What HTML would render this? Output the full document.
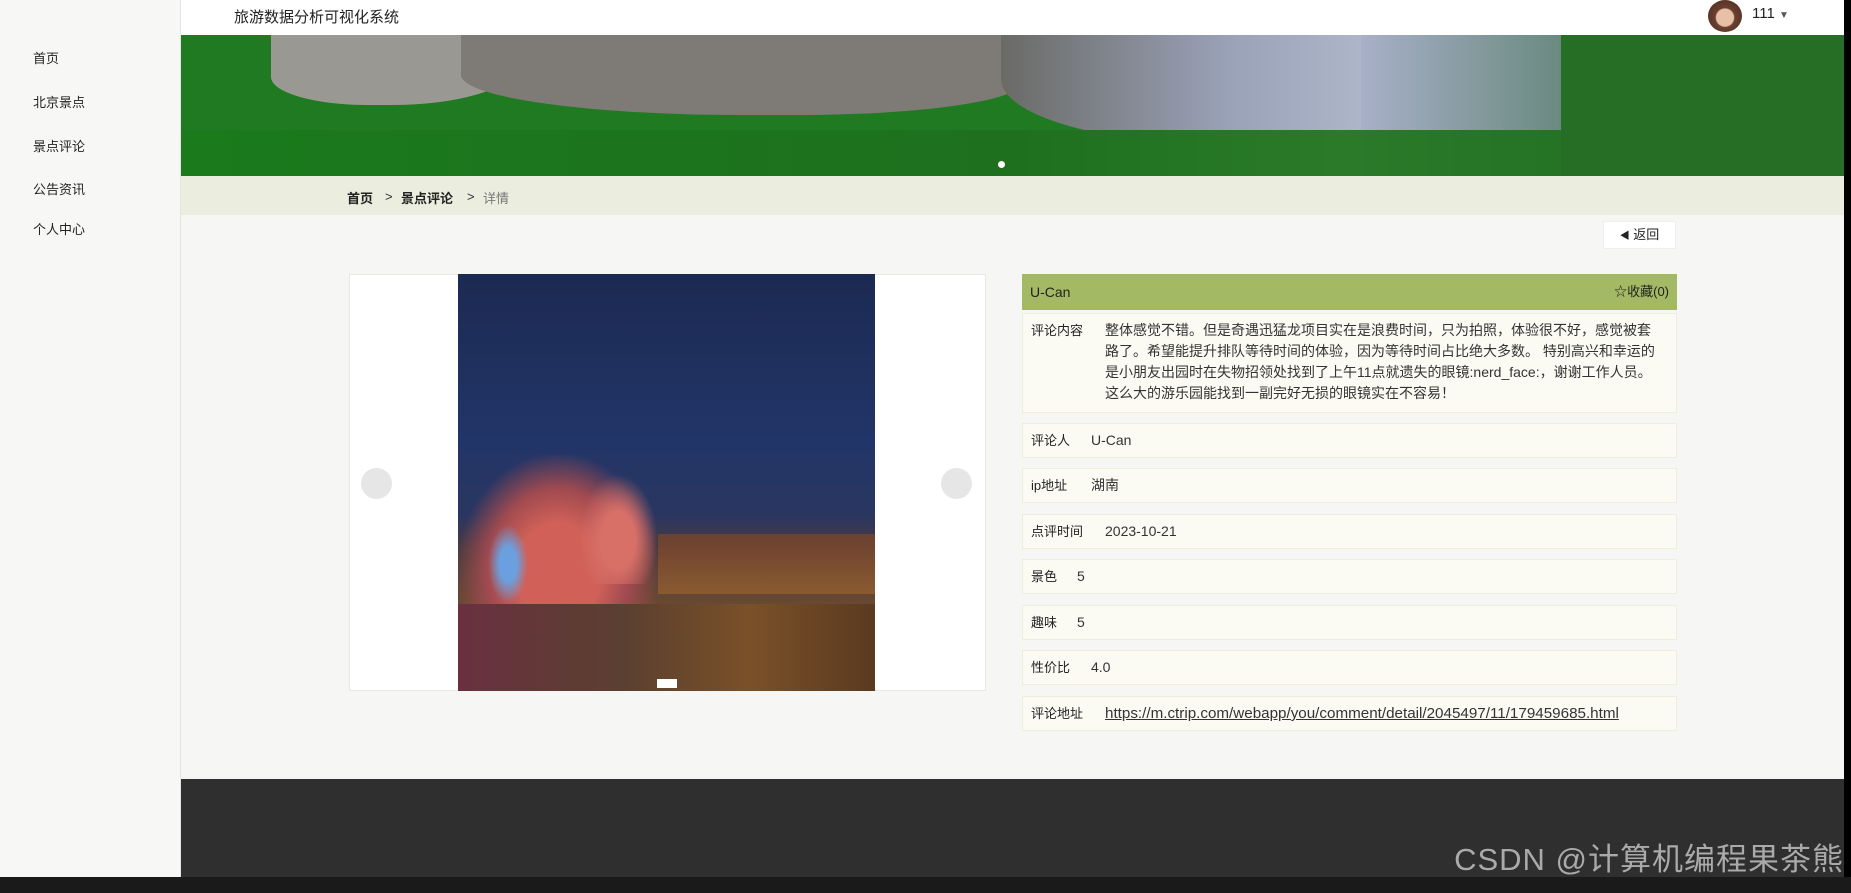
<!DOCTYPE html>
<html><head><meta charset="utf-8"><style>
*{margin:0;padding:0;box-sizing:border-box}
body{width:1851px;height:893px;overflow:hidden;background:#000;font-family:"Liberation Sans","Noto Sans CJK SC",sans-serif;font-size:14px;color:#333;position:relative}
.page{position:absolute;left:0;top:0;width:1844px;height:877px;background:#f6f6f4}
.side{position:absolute;left:0;top:0;width:181px;height:877px;background:#f7f7f5;border-right:1px solid #e4e4e0}
.side div{position:absolute;left:33px;font-size:13px;color:#222}
.top{position:absolute;left:181px;top:0;right:0;height:35px;background:#fff}
.title{position:absolute;left:234px;top:6px;font-size:15px;color:#222}
.banner{position:absolute;left:181px;top:35px;width:1663px;height:141px;overflow:hidden;background:#1f7a22}
.crumb{position:absolute;left:181px;top:176px;width:1663px;height:39px;background:#ebeddf}
.crumb span{position:absolute;top:12px;font-size:13px}
.back{position:absolute;left:1603px;top:221px;width:73px;height:28px;background:#fff;border:1px solid #eee;font-size:13px;line-height:26px;text-align:center;color:#222}
.lp{position:absolute;left:349px;top:274px;width:637px;height:417px;background:#fff;border:1px solid #e8e8e4}
.img{position:absolute;left:458px;top:274px;width:417px;height:417px;overflow:hidden;background:linear-gradient(180deg,#1c2a52 0%,#223568 40%,#2a3660 58%,#4a3a40 66%,#6a4a30 80%,#503028 100%)}
.arrow{position:absolute;top:468px;width:31px;height:31px;border-radius:50%;background:#e6e6e6}
.rp-h{position:absolute;left:1022px;top:274px;width:655px;height:36px;background:#a4b963;color:#222;font-size:14px;line-height:36px;padding:0 8px}
.row{position:absolute;left:1022px;width:655px;background:#fbfbf3;border:1px solid #ecefdd;font-size:13px;color:#222;height:35px}
.row b{font-weight:normal;position:absolute;left:8px;top:0;line-height:33px}
.row span{font-size:14px;position:absolute;top:0;line-height:33px;color:#333}
.foot{position:absolute;left:181px;top:779px;width:1663px;height:98px;background:#2f2f2f}
</style></head><body>
<div class="page">
<div class="side">
<div style="top:48px">首页</div><div style="top:92px">北京景点</div><div style="top:136px">景点评论</div><div style="top:179px">公告资讯</div><div style="top:219px">个人中心</div>
</div>
<div class="top"></div>
<div class="title">旅游数据分析可视化系统</div>
<div style="position:absolute;left:1708px;top:0;width:34px;height:32px;border-radius:50%;background:radial-gradient(circle at 50% 55%,#e8c0a8 0 35%,#6a4030 40%,#4a2a20 100%)"></div>
<div style="position:absolute;left:1752px;top:5px;font-size:15px;color:#222">111 <span style="font-size:10px;color:#555">▼</span></div>
<div class="banner">
<div style="position:absolute;left:90px;top:0;width:240px;height:70px;border-radius:0 0 50% 40%;background:#9a9892"></div>
<div style="position:absolute;left:280px;top:0;width:560px;height:80px;border-radius:0 0 40% 50%;background:#7e7b76"></div>
<div style="position:absolute;left:820px;top:0;width:380px;height:110px;border-radius:0 0 30% 60%;background:linear-gradient(90deg,#6a6a66,#9aa2b8 60%,#b0b8cc)"></div>
<div style="position:absolute;left:1180px;top:0;width:200px;height:120px;background:linear-gradient(90deg,#a8b0c8,#6a8a80)"></div>
<div style="position:absolute;left:0;top:95px;width:1663px;height:46px;background:linear-gradient(90deg,#1a7a1c,#1e701e 50%,#2a7a2a 70%,#1e6a1e)"></div>
<div style="position:absolute;left:1380px;top:0;width:283px;height:141px;background:#266e26"></div>
<div style="position:absolute;left:817px;top:126px;width:7px;height:7px;border-radius:50%;background:#fff"></div>
</div>
<div class="crumb"><span style="left:166px;font-weight:bold;color:#222">首页</span><span style="left:204px;color:#333;top:13px">&gt;</span><span style="left:220px;font-weight:bold;color:#222">景点评论</span><span style="left:286px;color:#333;top:13px">&gt;</span><span style="left:302px;color:#777">详情</span></div>
<div class="back"><span style="font-size:10px">◀</span> 返回</div>
<div class="lp"></div>
<div class="img">
<div style="position:absolute;left:0;top:180px;width:200px;height:170px;background:radial-gradient(ellipse at 50% 70%,#d06058 0 30%,#a04a50 50%,rgba(0,0,0,0) 72%)"></div>
<div style="position:absolute;left:120px;top:200px;width:80px;height:110px;background:radial-gradient(ellipse at 50% 60%,#d87068 0 30%,rgba(0,0,0,0) 70%)"></div>
<div style="position:absolute;left:30px;top:250px;width:40px;height:80px;background:radial-gradient(ellipse,#6aa0e0 0 30%,rgba(0,0,0,0) 70%)"></div>
<div style="position:absolute;left:200px;top:260px;width:217px;height:60px;background:linear-gradient(180deg,#6a4030,#8a5a30)"></div>
<div style="position:absolute;left:0;top:330px;width:417px;height:87px;background:linear-gradient(90deg,#6a3040,#5a4030 40%,#7a5028 70%,#5a3a20)"></div>
<div style="position:absolute;left:199px;top:405px;width:20px;height:9px;background:#fff"></div>
</div>
<div class="arrow" style="left:361px"></div><div class="arrow" style="left:941px"></div>
<div class="rp-h">U-Can<span style="float:right;font-size:13px">☆收藏(0)</span></div>
<div class="row" style="top:313px;height:100px;padding:6px 0"><b style="top:6px;line-height:21px">评论内容</b><div style="margin-left:82px;margin-right:12px;font-size:14px;line-height:21px;color:#333">整体感觉不错。但是奇遇迅猛龙项目实在是浪费时间，只为拍照，体验很不好，感觉被套路了。希望能提升排队等待时间的体验，因为等待时间占比绝大多数。 特别高兴和幸运的是小朋友出园时在失物招领处找到了上午11点就遗失的眼镜:nerd_face:，谢谢工作人员。这么大的游乐园能找到一副完好无损的眼镜实在不容易！</div></div>
<div class="row" style="top:423px"><b>评论人</b><span style="left:68px">U-Can</span></div>
<div class="row" style="top:468px"><b>ip地址</b><span style="left:68px">湖南</span></div>
<div class="row" style="top:514px"><b>点评时间</b><span style="left:82px">2023-10-21</span></div>
<div class="row" style="top:559px"><b>景色</b><span style="left:54px">5</span></div>
<div class="row" style="top:605px"><b>趣味</b><span style="left:54px">5</span></div>
<div class="row" style="top:650px"><b>性价比</b><span style="left:68px">4.0</span></div>
<div class="row" style="top:696px"><b>评论地址</b><span style="left:82px;text-decoration:underline;font-size:15.2px">https://m.ctrip.com/webapp/you/comment/detail/2045497/11/179459685.html</span></div>
<div class="foot"><div style="position:absolute;right:0;top:55px;font-size:31px;color:#aaa;white-space:nowrap;letter-spacing:1px">CSDN @计算机编程果茶熊</div></div>
</div>
<div style="position:absolute;left:0;top:877px;width:1851px;height:16px;background:#1a1a1a"></div>
</body></html>
